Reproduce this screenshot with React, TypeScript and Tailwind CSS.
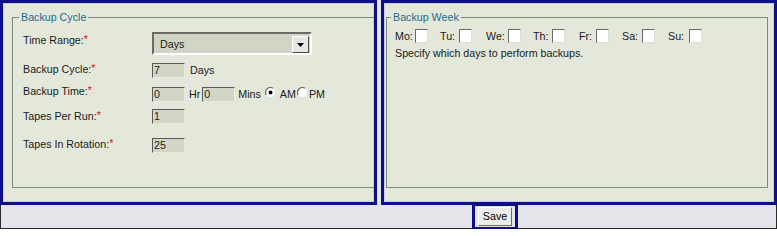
import React from "react";

const font = "font-['Liberation_Sans',Arial,sans-serif]";

function Req({ children }: { children: React.ReactNode }) {
  return (
    <span>
      {children}
      <span className="text-[#e01010] relative top-[-1px]">*</span>
    </span>
  );
}

function TextBox({ value, w = "w-[33px]" }: { value: string; w?: string }) {
  return (
    <div
      className={`${w} h-[15px] bg-[#d3d6c6] border-t border-l border-t-[#5a5a5a] border-l-[#5a5a5a] border-b border-r border-b-[#e8ebe0] border-r-[#e8ebe0] pl-[1px] text-[10.7px] leading-[13px] text-[#222]`}
    >
      {value}
    </div>
  );
}

function Radio({ checked }: { checked?: boolean }) {
  return (
    <svg width="11" height="11" viewBox="0 0 11 11" className="block">
      <circle cx="5.5" cy="5.5" r="5" fill="#ffffff" />
      <path d="M1.2 8 A5 5 0 0 1 8 1.2" fill="none" stroke="#6a6a6a" strokeWidth="1.2" />
      <path d="M9.8 3 A5 5 0 0 1 3 9.8" fill="none" stroke="#e4e4e4" strokeWidth="1" />
      {checked && <circle cx="5.5" cy="5.5" r="2" fill="#000" />}
    </svg>
  );
}

function Check() {
  return (
    <div className="w-[13px] h-[14px] bg-white border-t border-l border-t-[#6a6a6a] border-l-[#6a6a6a] border-b border-r border-b-[#dcdcdc] border-r-[#dcdcdc]" />
  );
}

const days = [
  { l: "Mo:", w: "w-[45px]", lw: "w-[20px]" },
  { l: "Tu:", w: "w-[46px]", lw: "w-[19px]" },
  { l: "We:", w: "w-[47px]", lw: "w-[22px]" },
  { l: "Th:", w: "w-[46px]", lw: "w-[19px]" },
  { l: "Fr:", w: "w-[43px]", lw: "w-[17px]" },
  { l: "Sa:", w: "w-[46px]", lw: "w-[20px]" },
  { l: "Su:", w: "w-[46px]", lw: "w-[21px]" },
];

export default function App() {
  return (
    <div className={`w-[777px] bg-white ${font} text-[10.7px] leading-[13px] text-[#1a1a1a]`}>
      <div className="flex gap-[4px] bg-[#e4e4ea]">
        {/* Left panel */}
        <div className="w-[377px] h-[205px] border-[3px] border-[#0e0e86] overflow-hidden">
          <div className="h-full border border-[#c9cde0] bg-[#e3e8da] pt-[13px] pl-[8px]">
            <div className="relative h-[171px] -mr-[2px] border border-[#7c8a7c] pt-[14px] pl-[10px]">
              <span className="absolute left-[6px] top-[-7px] px-[2px] bg-[#e3e8da] text-[#1f6a8e] leading-[13px]">
                Backup Cycle
              </span>

              {/* Row 1 */}
              <div className="flex items-start h-[23px]">
                <div className="w-[129px] mt-[2px]">
                  <Req>Time Range:</Req>
                </div>
                <div className="relative w-[160px] h-[23px] bg-[#d2d5c5] border-t-2 border-l-2 border-t-[#6c6c66] border-l-[#6c6c66] border-b-2 border-r-2 border-b-white border-r-white flex items-center pl-[6px]">
                  <span className="mt-[1px]">Days</span>
                  <div className="absolute right-[1px] top-[2px] w-[17px] h-[17px] bg-[#e6e6e2] border-t border-l border-t-white border-l-white border-b border-r border-b-[#4a4a4a] border-r-[#4a4a4a] flex items-center justify-center">
                    <svg width="7" height="4" viewBox="0 0 7 4">
                      <path d="M0 0 H7 L3.5 4 Z" fill="#000" />
                    </svg>
                  </div>
                </div>
              </div>

              {/* Row 2 */}
              <div className="flex items-start h-[15px] mt-[8px]">
                <div className="w-[129px] mt-[0px]">
                  <Req>Backup Cycle:</Req>
                </div>
                <TextBox value="7" />
                <span className="ml-[5px] mt-[1px]">Days</span>
              </div>

              {/* Row 3 */}
              <div className="flex items-start h-[15px] mt-[9px]">
                <div className="w-[129px] mt-[-2px]">
                  <Req>Backup Time:</Req>
                </div>
                <TextBox value="0" />
                <span className="ml-[4px] mt-[1px]">Hr</span>
                <div className="ml-[2px]">
                  <TextBox value="0" />
                </div>
                <span className="ml-[3px] mt-[1px]">Mins</span>
                <div className="ml-[4px] mt-[0px]">
                  <Radio checked />
                </div>
                <span className="ml-[4px] mt-[1px]">AM</span>
                <div className="ml-[1px] mt-[0px]">
                  <Radio />
                </div>
                <span className="ml-[1px] mt-[1px]">PM</span>
              </div>

              {/* Row 4 */}
              <div className="flex items-start h-[15px] mt-[7px]">
                <div className="w-[129px] mt-[1px]">
                  <Req>Tapes Per Run:</Req>
                </div>
                <TextBox value="1" />
              </div>

              {/* Row 5 */}
              <div className="flex items-start h-[15px] mt-[14px]">
                <div className="w-[129px] mt-[0px]">
                  <Req>Tapes In Rotation:</Req>
                </div>
                <TextBox value="25" />
              </div>
            </div>
          </div>
        </div>

        {/* Right panel */}
        <div className="flex-1 h-[205px] border-[3px] border-[#0e0e86]">
          <div className="h-full border border-[#c9cde0] bg-[#e3e8da] pt-[13px] pl-[1px] pr-[5px]">
            <div className="relative h-[171px] border border-[#7c8a7c] pt-[11px] pl-[8px]">
              <span className="absolute left-[4px] top-[-7px] px-[2px] bg-[#e3e8da] text-[#1f6a8e] leading-[13px]">
                Backup Week
              </span>
              <div className="flex items-center h-[14px]">
                {days.map((d) => (
                  <div key={d.l} className={`${d.w} flex items-center`}>
                    <span className={d.lw}>{d.l}</span>
                    <Check />
                  </div>
                ))}
              </div>
              <div className="mt-[4px]">Specify which days to perform backups.</div>
            </div>
          </div>
        </div>
      </div>

      {/* Bottom strip */}
      <div className="h-[26px] bg-[#e4e4ea] border-l border-r border-b border-[#2a2a2a]">
        <div className="ml-[471px] -mt-[2px] w-[46px] h-[27px] border-[3px] border-[#0e0e86] flex items-center justify-center">
          <button className="w-[34px] h-[19px] bg-[#ececec] border-t border-l border-t-white border-l-white border-b border-r border-b-[#6a6a6a] border-r-[#6a6a6a] text-[10.7px] leading-[13px] text-black">
            Save
          </button>
        </div>
      </div>
    </div>
  );
}
